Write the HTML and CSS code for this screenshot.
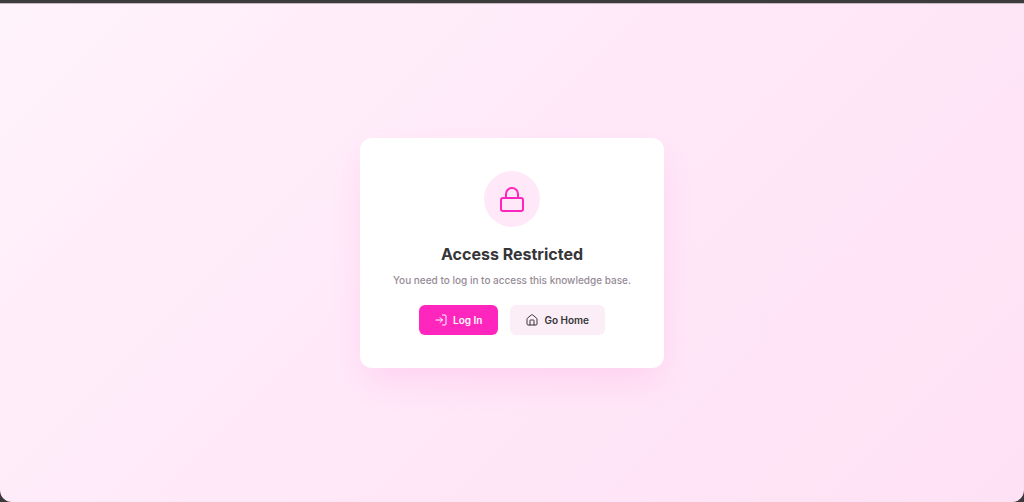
FILE: index.html
```
<!DOCTYPE html>
<html lang="en">
<head>
    <meta charset="UTF-8">
    <meta name="viewport" content="width=device-width, initial-scale=1.0">
    <title>Access Restricted</title>
    <link rel="stylesheet" href="styles.css">
</head>
<body>
    <main class="page">
        <section class="card">
            <div class="lock-badge">
                <svg class="lock-icon" viewBox="0 0 28 28" aria-hidden="true">
                    <rect x="3" y="13" width="22" height="13" rx="2"/>
                    <path d="M8 13V9a6 6 0 0 1 12 0v4"/>
                </svg>
            </div>
            <h1>Access Restricted</h1>
            <p>You need to log in to access this knowledge base.</p>
            <div class="actions">
                <button type="button" class="btn btn-primary">
                    <svg class="btn-icon" viewBox="0 0 24 24" aria-hidden="true">
                        <path d="M15 2h5a2 2 0 0 1 2 2v16a2 2 0 0 1-2 2h-5"/>
                        <path d="M10 17l5-5-5-5M15 12H2"/>
                    </svg>
                    Log In
                </button>
                <button type="button" class="btn btn-secondary">
                    <svg class="btn-icon" viewBox="0 0 24 24" aria-hidden="true">
                        <path d="M2 10a2 2 0 0 1 .7-1.5l8-6.7a2 2 0 0 1 2.6 0l8 6.7A2 2 0 0 1 22 10v10a2 2 0 0 1-2 2H4a2 2 0 0 1-2-2z"/>
                        <path d="M8 22v-9a1 1 0 0 1 1-1h6a1 1 0 0 1 1 1v9"/>
                    </svg>
                    Go Home
                </button>
            </div>
        </section>
    </main>
</body>
</html>
```

FILE: styles.css
```
* {
    box-sizing: border-box;
}
body {
    margin: 0;
    min-height: 100vh;
    display: flex;
    background: #3c393c;
    border-top: 3px solid #3c3c3c;
    font-family: Inter, "Liberation Sans", sans-serif;
}
.page {
    flex: 1;
    display: flex;
    align-items: center;
    justify-content: center;
    border-top: 1px solid #c5b8c1;
    border-radius: 0 0 12px 12px;
    background: linear-gradient(135deg, #fff3fb 0%, #ffe8f8 50%, #fee1f4 100%);
}
.card {
    display: flex;
    flex-direction: column;
    align-items: center;
    padding: 33px;
    border-radius: 12px;
    background: #fff;
    box-shadow: 0 16px 36px -6px rgba(255, 38, 190, 0.12);
}
.lock-badge {
    display: flex;
    align-items: center;
    justify-content: center;
    width: 56px;
    height: 56px;
    margin-bottom: 16px;
    border-radius: 50%;
    background: #ffe8f8;
    color: #ff26be;
}
.lock-icon {
    width: 28px;
    height: 28px;
}
.btn-icon {
    width: 12px;
    height: 12px;
}
.lock-icon,
.btn-icon {
    fill: none;
    stroke: currentColor;
    stroke-width: 2;
    stroke-linecap: round;
    stroke-linejoin: round;
}
h1 {
    margin: 0 0 8px;
    color: #363538;
    font-size: 16px;
    font-weight: 700;
    line-height: 22px;
}
p {
    margin: 0 0 18px;
    color: #968b96;
    font-size: 10px;
    font-weight: 500;
    line-height: 14px;
}
.actions {
    display: flex;
    gap: 12px;
}
.btn {
    display: flex;
    align-items: center;
    gap: 6px;
    padding: 0 16px;
    height: 30px;
    border: 0;
    border-radius: 6px;
    font-family: inherit;
    font-size: 10px;
    font-weight: 600;
    cursor: pointer;
}
.btn-primary {
    background: #ff26be;
    color: #fff;
}
.btn-secondary {
    background: #fbeef7;
    color: #363538;
}
```
